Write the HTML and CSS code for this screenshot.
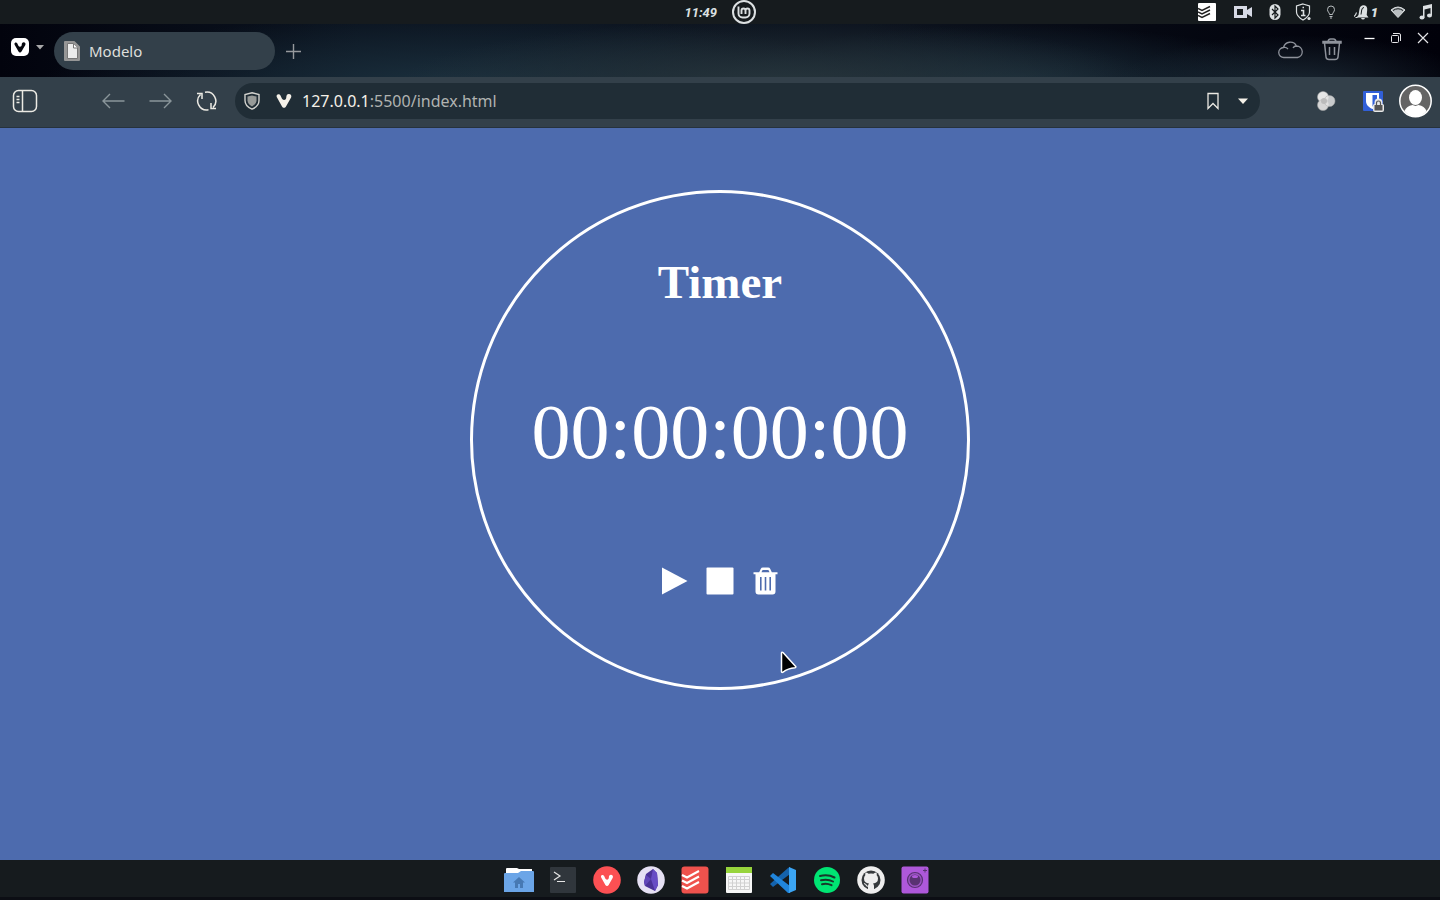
FILE: index.html
```html
<!DOCTYPE html>
<html lang="pt-BR">
<head>
<meta charset="utf-8">
<title>Modelo</title>
<link rel="stylesheet" href="styles.css">
</head>
<body>
<svg class="defs" aria-hidden="true">
  <symbol id="vivaldi" viewBox="0 0 16 16"><path d="M.6 3.400C.3 1 3.500.4 4.500 2.600c1 2.200 1.500 4.400 3.500 4.400 1.500 0 2.300-1.300 2.300-2.700 0-2.100 1-3.300 2.500-3.300 2 0 3.100 1.800 2.300 3.500L10 13.400c-.8 1.700-3.200 1.700-4 0L1 4.500Q.7 4 .6 3.400z"/></symbol>
</svg>

<header class="panel">
  <time class="clock">11:49</time>
  <svg class="mint" width="26" height="24" viewBox="0 0 26 24" fill="none" stroke="#dce0e2"><circle cx="13" cy="12" r="11" stroke-width="2"/><path d="M7.500 6.500v7a4 4 0 0 0 4 4h3a4 4 0 0 0 4-4v-3a2 2 0 0 0-4 0v3.500m0-3.500a2 2 0 0 0-4 0v3.500" stroke-width="1.900"/></svg>
  <div class="tray">
    <svg width="18" height="18" viewBox="0 0 18 18"><rect width="18" height="18" rx="1" fill="#fff"/><path d="M0 5.500l4 2 8-4M0 9l4 2 8-4M0 12.500l4 2 8-4" fill="none" stroke="#222" stroke-width="1.400"/></svg>
    <svg class="camera" width="18" height="14" viewBox="0 0 18 14" fill="#d6d9e5"><path fill-rule="evenodd" d="M0 1h13v4l5-3v10l-5-3v4H0zM3 4v6h6V4z"/></svg>
    <svg class="bluetooth" width="12" height="16" viewBox="0 0 12 16"><rect x=".5" width="11" height="16" rx="5.500" fill="#dce0e2"/><path d="M3 5l6 6-3 3V2l3 3-6 6" fill="none" stroke="#161b1e" stroke-width="1.200"/></svg>
    <svg class="shield" width="16" height="18" viewBox="0 0 16 18" fill="none" stroke="#dce0e2"><path d="M8 1l6.500 2v6c0 4-3 6-6.500 8-3.500-2-6.500-4-6.500-8V3z" stroke-width="1.200"/><path d="M6 7.500h2.500v5M6 12.500h4.500M7.500 4.500h1.500" stroke-width="1.600"/><circle cx="14" cy="15.500" r="1.600" fill="#dce0e2" stroke="none"/></svg>
    <svg class="bulb" width="10" height="14" viewBox="0 0 10 14" fill="none" stroke="#b6bbbe"><path d="M3.500 9.500C3.500 7.500 1.500 7 1.500 4.500a3.500 3.500 0 0 1 7 0C8.500 7 6.500 7.500 6.500 9.500zM3.500 11.500h3M4 13h2"/></svg>
    <svg class="bell" width="16" height="16" viewBox="0 0 16 16" fill="#dce0e2"><path d="M4.500 11l1-6C6 2 8 1 10 1.300c2.500.4 3.500 2.300 3.200 4.700l-.5 5 1.800 2.500H2.500z"/><path d="M7 10.500l.7-4.500q.4-2.500 2.300-2.500" stroke="#161b1e" fill="none"/><path d="M7 14h4q-.5 1.500-2 1.500T7 14z"/><path d="M0 12.500q2-1.500 2.500-4M1.500 13.500h2" stroke="#dce0e2" stroke-width="1.200" fill="none"/></svg>
    <b class="count">1</b>
    <svg class="wifi" width="16" height="12" viewBox="0 0 16 12"><path d="M1 4Q8-2 15 4l-7 7.500z" fill="#b9bec1" stroke="#dce0e2"/><path d="M3 4.500q5-3.500 10 0" fill="none" stroke="#161b1e"/></svg>
    <svg class="music" width="14" height="16" viewBox="0 0 14 16" fill="#dce0e2"><path d="M4 2l9-2v11h-1.500V4L5.500 5.500v8H4z"/><ellipse cx="3" cy="13.500" rx="2.500" ry="2"/><ellipse cx="10.500" cy="11.500" rx="2.500" ry="2"/></svg>
  </div>
</header>

<section class="tabs">
  <button class="menu" aria-label="Menu">
    <svg width="18" height="18" viewBox="0 0 18 18"><rect width="18" height="18" rx="5" fill="#fff"/><use href="#vivaldi" x="3" y="3.500" width="12" height="12" fill="#05070e"/></svg>
    <svg width="8" height="5" viewBox="0 0 8 5"><path d="M0 0h8L4 4.500z" fill="#a9a9aa"/></svg>
  </button>
  <button class="tab">
    <svg width="16" height="20" viewBox="0 0 16 20"><path d="M1 1h9l5 5v13H1z" fill="#969696" stroke="#969696" stroke-width="2" stroke-linejoin="round"/><path d="M3.500 2.500h6L13.500 7v10.500h-10z" fill="#ececec" stroke="#777"/><path d="M9.500 3v4h4" fill="#fff" stroke="#777"/></svg>
    Modelo
  </button>
  <button class="add" aria-label="Nova aba"><svg width="15" height="15" viewBox="0 0 15 15"><path d="M7.500 0v15M0 7.500h15" stroke="#96999d" stroke-width="1.400"/></svg></button>
  <div class="tab-tools">
    <button aria-label="Sincronizar"><svg width="26" height="20" viewBox="0 0 26 20" fill="none" stroke="#8e929b" stroke-width="1.300"><path d="M6 18.500a5 5 0 0 1-.5-10A7 7 0 0 1 18.500 7a5.800 5.800 0 0 1 1 11.500zM5.500 8.500q2.500-.8 4.500 1.500M18.500 7q-2.500 0-3.500 2"/></svg></button>
    <button aria-label="Abas fechadas"><svg width="20" height="23" viewBox="0 0 20 23" fill="none" stroke="#8e929b" stroke-width="1.500"><path d="M1 5V3.500h18V5zM6 3.500Q6.500 1 8.500 1h3q2 0 2.500 2.500M2.500 5l1.500 14q.3 2.500 3 2.500h6q2.700 0 3-2.500L17.500 5M7.500 9v8M12.500 9v8"/></svg></button>
  </div>
  <div class="window-tools">
    <button aria-label="Minimizar"><svg width="12" height="12" viewBox="0 0 12 12"><path d="M1.500 6.500h10" stroke="#fff" stroke-width="1.300"/></svg></button>
    <button aria-label="Restaurar"><svg width="12" height="12" viewBox="0 0 12 12" fill="none" stroke="#e5e5e8"><rect x="1.500" y="3.500" width="7" height="7" rx="1"/><path d="M3 1.500h6q1.500 0 1.500 1.500v6"/></svg></button>
    <button aria-label="Fechar"><svg width="12" height="12" viewBox="0 0 12 12"><path d="M1 1l10 10M11 1L1 11" stroke="#e5e5e8" stroke-width="1.200"/></svg></button>
  </div>
</section>

<nav class="toolbar">
  <button class="side" aria-label="Painel"><svg width="26" height="24" viewBox="0 0 26 24" fill="none" stroke="#eceae4" stroke-width="1.500"><rect x="1.500" y="1.500" width="23" height="21" rx="5"/><path d="M10.500 1.500v21M4.500 7.500h3M4.500 10.500h3M4.500 13.500h3"/></svg></button>
  <button aria-label="Voltar"><svg width="24" height="16" viewBox="0 0 24 16" fill="none" stroke="#8a959a" stroke-width="1.400"><path d="M22.500 8H1M8 1L1 8l7 7"/></svg></button>
  <button aria-label="Avançar"><svg width="24" height="16" viewBox="0 0 24 16" fill="none" stroke="#8a959a" stroke-width="1.400"><path d="M.5 8H22M15 1l7 7-7 7"/></svg></button>
  <button aria-label="Recarregar"><svg width="22" height="20" viewBox="0 0 22 20" fill="none" stroke="#eceae4" stroke-width="1.500"><path d="M9 1.200a9 9 0 0 1 8 15.300M12.500 18.800a9 9 0 0 1-8-15.300M1 2.500h5v5.500M20 17.500h-5V12"/></svg></button>
  <div class="address">
    <svg class="guard" width="16" height="18" viewBox="0 0 16 18"><path d="M8 .8l7 1.700v6c0 4-3 7-7 8.700-4-1.700-7-4.700-7-8.700v-6z" fill="none" stroke="#d2d2ce" stroke-width="1.400"/><path d="M8 3.500l4.500 1v4c0 2.500-2 4.500-4.500 6-2.500-1.500-4.500-3.500-4.500-6v-4z" fill="#979a98"/></svg>
    <svg class="brand" width="16" height="16" fill="#f5f1e9"><use href="#vivaldi"/></svg>
    <a class="url" href="#timer">127.0.0.1<span>:5500/index.html</span></a>
    <button class="mark" aria-label="Favoritar"><svg width="12" height="18" viewBox="0 0 12 18"><path d="M1 1.500h10v15l-5-5-5 5z" fill="none" stroke="#eceae4" stroke-width="1.300"/></svg></button>
    <button aria-label="Histórico"><svg width="10" height="6" viewBox="0 0 10 6"><path d="M0 .5h10L5 6z" fill="#f5f1e9"/></svg></button>
  </div>
  <button class="rings" aria-label="Extensão"><svg width="20" height="20" viewBox="0 0 20 20" stroke="#aaa" stroke-width=".5"><circle cx="7" cy="6" r="5.500" fill="#e6e6e6"/><circle cx="7" cy="14" r="5.500" fill="#d6d6d6"/><circle cx="13.500" cy="10" r="5.500" fill="#e3e3e3" fill-opacity=".85"/><circle cx="8" cy="10" r="3" fill="#bbb" stroke="none"/></svg></button>
  <button class="vault" aria-label="Cofre"><svg width="22" height="22" viewBox="0 0 22 22"><rect x="1" y="1" width="20" height="20" rx="1" fill="#315fd8"/><path d="M4 3h13v8c0 4-3 6.500-6.500 8C7 17.500 4 15 4 11z" fill="#fff"/><path d="M10.500 5H15v6q0 3-4.500 5.500z" fill="#315fd8"/><path d="M12.500 14v-1.500a4 4 0 0 1 8 0V14q1.500 0 1.500 1.500V20q0 2-2 2h-7q-2 0-2-2v-4.500q0-1.500 1.500-1.500z" fill="#e8e8e8"/><rect x="12.500" y="15" width="8" height="5.500" fill="#555"/><path d="M14.500 15v-2a2 2 0 0 1 4 0v2" fill="none" stroke="#555" stroke-width="1.200"/></svg></button>
  <button aria-label="Perfil"><svg width="34" height="34" viewBox="0 0 34 34"><circle cx="17.500" cy="17" r="15.700" fill="#646464" stroke="#fff" stroke-width="1.500"/><ellipse cx="17.500" cy="13.500" rx="6.500" ry="7.500" fill="#fff"/><path d="M6.500 27q2-5 8-6l3 1 3-1q6 1 8 6-4 5.500-11 5.500T6.500 27z" fill="#fff"/></svg></button>
</nav>

<main class="page" id="timer">
  <section class="dial">
    <h1>Timer</h1>
    <div class="readout" role="timer">00:00:00:00</div>
    <div class="controls">
      <button aria-label="Iniciar"><svg width="26" height="28" viewBox="0 0 26 28"><path d="M0 .5L25.500 14 0 27.500z"/></svg></button>
      <button aria-label="Parar"><svg width="28" height="28" viewBox="0 0 28 28"><rect x=".5" y=".5" width="27" height="27" rx="1"/></svg></button>
      <button aria-label="Limpar"><svg width="26" height="28" viewBox="0 0 26 28"><path fill-rule="evenodd" d="M1.500 5.300h5.700L8.700 2Q9.300.6 11 .6h5Q17.700.6 18.300 2l1.500 3.300h5.700v2h-2V24.500q0 3-3 3h-14q-3 0-3-3V7.300h-2zM9.500 5.300h8l-.7-1.700q-.2-.6-.8-.6h-5q-.6 0-.8.600zM8 10v13.500h1.600V10zm4.700 0v13.500h1.600V10zm4.700 0v13.500H19V10z"/></svg></button>
    </div>
  </section>
  <svg class="pointer" width="20" height="26" viewBox="0 0 20 26"><path d="M2.500 3v18.500q.3 1.500 1.500.7 5-4 12-4.500 1.300-.4.700-1.300L4 2.500q-1.200-.8-1.500.5z" fill="#000" stroke="#fff" stroke-width="1.500" stroke-linejoin="round"/></svg>
</main>

<footer class="dock">
  <button aria-label="Arquivos"><svg width="32" height="28" viewBox="0 0 32 28"><path d="M3 3q0-1 1-1h10l2 1h13v6H3z" fill="#fff"/><path d="M1 8q0-1 1-1h13l3-2h12q1 0 1 1v20H1z" fill="#6ba5e7"/><path d="M16 11l6 5.500h-2V22h-3v-4h-2v4h-3v-5.500h-2z" fill="#4779b3"/></svg></button>
  <button aria-label="Terminal"><svg width="28" height="28" viewBox="0 0 28 28"><rect x="1" y="1" width="26" height="26" rx="1" fill="#30363c"/><path d="M5 6l6 4-6 4M8 15.500h8" fill="none" stroke="#e6e6e6" stroke-width="1.200"/></svg></button>
  <button aria-label="Vivaldi"><svg width="28" height="28" viewBox="0 0 28 28"><circle cx="14" cy="14" r="13.800" fill="#fc5053"/><use href="#vivaldi" x="7.500" y="8" width="13" height="13" fill="#fff"/></svg></button>
  <button aria-label="Obsidian"><svg width="28" height="28" viewBox="0 0 28 28"><circle cx="14" cy="14" r="13.800" fill="#e6e1f4"/><path d="M16 3l4 4 1 12-3 6-10-5-1-4 2-8z" fill="#4b3298"/><path d="M16 3l-2 10 4 12 3-6-1-12z" fill="#684cc5"/><path d="M9 9l5 4-6 7-1-4z" fill="#6247b9"/></svg></button>
  <button aria-label="Todoist"><svg width="28" height="28" viewBox="0 0 28 28"><rect x=".5" y=".5" width="27" height="27" rx="3" fill="#ef524d"/><path d="M1 9l5 2.500 12-6.500M1 14.500L6 17l12-6.500M1 20l5 2.500L18 16" fill="none" stroke="#fff" stroke-width="2"/></svg></button>
  <button aria-label="Calendário"><svg width="28" height="28" viewBox="0 0 28 28"><rect x="1" y="1" width="26" height="26" rx="1" fill="#f7f7f7"/><path d="M1 1h26v6H1z" fill="#97d43c"/><path d="M3.500 10.500h21v13h-21zM3.500 13.500h21M3.500 17h21M3.500 20.500h21M7.500 10.500v13M11.500 10.500v13M15.500 10.500v13M19.500 10.500v13" fill="none" stroke="#d1d1d1"/></svg></button>
  <button aria-label="Código"><svg width="28" height="28" viewBox="0 0 28 28"><path d="M1 18l3 3L21 8V1L19 2z" fill="#1463ad"/><path d="M1 10l3-3 17 13v7h-2z" fill="#2085db"/><path d="M20 1l7 3v20l-7 3z" fill="#3ba5f4"/></svg></button>
  <button aria-label="Spotify"><svg width="28" height="28" viewBox="0 0 28 28"><circle cx="14" cy="14" r="13" fill="#00e573"/><path d="M7 10q8-2 14.500 1.500M8 14.200q7-1.500 12 1.300M9 18.200q5-1.200 9.500 1" fill="none" stroke="#18382b" stroke-width="2" stroke-linecap="round"/></svg></button>
  <button aria-label="GitHub"><svg width="28" height="28" viewBox="0 0 28 28"><circle cx="14" cy="14" r="13.800" fill="#eee"/><circle cx="14" cy="14" r="9.500" fill="#35393c"/><path d="M11 24v-4q0-1.500 1-2.500-5-.5-5-5 0-2 1.300-3.300Q8 7.700 8.600 6.500q1.400 0 3 1.200 2.400-.6 4.800 0 1.600-1.200 3-1.200.6 1.200.3 2.700Q21 10.500 21 12.500q0 4.500-5 5 1 1 1 2.500v4z" fill="#eee"/><path d="M7 17.500q2 .5 2.500 2 .5 1 2 .7" fill="none" stroke="#eee" stroke-width="1.200"/></svg></button>
  <button aria-label="Câmera"><svg width="28" height="28" viewBox="0 0 28 28"><rect x=".5" y=".5" width="27" height="27" rx="2" fill="#ae58da"/><circle cx="14" cy="14" r="7.500" fill="#9c54c4" stroke="#593272" stroke-width="1.200"/><circle cx="14" cy="14" r="5.500" fill="#593272"/><ellipse cx="14" cy="10.500" rx="3" ry="1.500" fill="#ae58da"/><path d="M24 2.500v4M22 4.500h4" stroke="#593272"/></svg></button>
</footer>
</body>
</html>
```
FILE: styles.css
```css
* { box-sizing: border-box; }
body {
  margin: 0;
  min-height: 100vh;
  display: flex;
  flex-direction: column;
  font-family: "Noto Sans", sans-serif;
  background: #4d6bae;
}
button {
  padding: 0;
  border: 0;
  background: none;
  color: inherit;
  font: inherit;
  display: flex;
  align-items: center;
}
svg { display: block; flex: none; }
.defs { position: absolute; width: 0; height: 0; }

.panel {
  height: 24px;
  display: grid;
  grid-template-columns: 1fr auto 1fr;
  align-items: center;
  padding-left: 48px;
  background: #161b1e;
  color: #dce0e2;
  font-family: Roboto, sans-serif;
  font-size: 13px;
  font-weight: 700;
  font-style: italic;
}
.clock { justify-self: end; padding-right: 14px; }
.tray {
  justify-self: end;
  display: flex;
  align-items: center;
  padding-right: 7px;
}
.camera { margin-left: 18px; }
.bluetooth { margin-left: 17px; }
.shield { margin-left: 14px; }
.bulb { margin-left: 15px; }
.bell { margin-left: 18px; }
.count { margin-left: 1px; }
.wifi { margin-left: 12px; }
.music { margin-left: 13px; }

.tabs {
  height: 53px;
  display: flex;
  align-items: flex-start;
  padding: 8px 11px 0 11px;
  background:
    radial-gradient(ellipse 380px 65px at 54% 115%, #27353c, transparent),
    radial-gradient(ellipse 420px 70px at 32% 115%, #1b303e, transparent),
    radial-gradient(ellipse 300px 60px at 70% 115%, #1c303d, transparent),
    radial-gradient(ellipse 180px 50px at 90% 115%, #1a2732, transparent),
    linear-gradient(90deg, #02030d, #0b1420 25%, #0d141f 60%, #050812 80%, #01010a);
}
.menu { gap: 7px; padding-top: 6px; }
.tab {
  width: 221px;
  height: 38px;
  margin-left: 10px;
  padding-left: 10px;
  gap: 9px;
  border-radius: 19px;
  background: #33404a;
  color: #dedfdc;
  font-size: 15px;
}
.add { height: 38px; margin-left: 11px; }
.tab-tools {
  height: 34px;
  display: flex;
  align-items: center;
  gap: 18px;
  margin-left: auto;
}
.window-tools { display: flex; gap: 15px; margin-left: 21px; }

.toolbar {
  height: 51px;
  display: flex;
  align-items: center;
  padding: 0 8px 2px 12px;
  background: #33404a;
  border-bottom: 1px solid #26323d;
}
.side { margin-right: 64px; }
.toolbar > button + button { margin-right: 23px; }
.toolbar > .address {
  flex: 1;
  height: 36px;
  display: flex;
  align-items: center;
  margin-right: 56px;
  margin-left: -6px;
  padding: 0 12px 0 9px;
  border-radius: 18px;
  background: #202d36;
}
.brand { margin-left: 16px; }
.url {
  margin-left: 10px;
  color: #f5f1e9;
  font-size: 16px;
  text-decoration: none;
}
.url span { color: #b0b3b1; }
.mark { margin-left: auto; margin-right: 19px; }
.toolbar > .rings { margin-right: 26px; }
.toolbar > .vault { margin-right: 14px; }
.toolbar > button:last-child { margin-right: 0; }

.page {
  flex: 1;
  position: relative;
  display: flex;
  justify-content: center;
  align-items: flex-start;
  padding: 62px 16px;
  color: #fff;
  font-family: "Liberation Serif", serif;
}
.dial {
  width: 500px;
  aspect-ratio: 1;
  display: flex;
  flex-direction: column;
  align-items: center;
  padding-top: 61px;
  border: 3px solid #fff;
  border-radius: 50%;
}
h1 { margin: 0; font-size: 47px; line-height: 56px; }
.readout { margin: 77px 0 90px; font-size: 78px; line-height: 90px; }
.controls { display: flex; gap: 18px; }
.controls svg { fill: #fff; }
.pointer { position: absolute; left: calc(50% + 59px); top: 522px; }

.dock {
  height: 40px;
  display: flex;
  justify-content: center;
  align-items: center;
  gap: 16px;
  padding: 3px 6px 0 0;
  background: #161b1e;
  border-bottom: 3px solid #0c0e14;
}
.dock button { width: 28px; justify-content: center; }
```
